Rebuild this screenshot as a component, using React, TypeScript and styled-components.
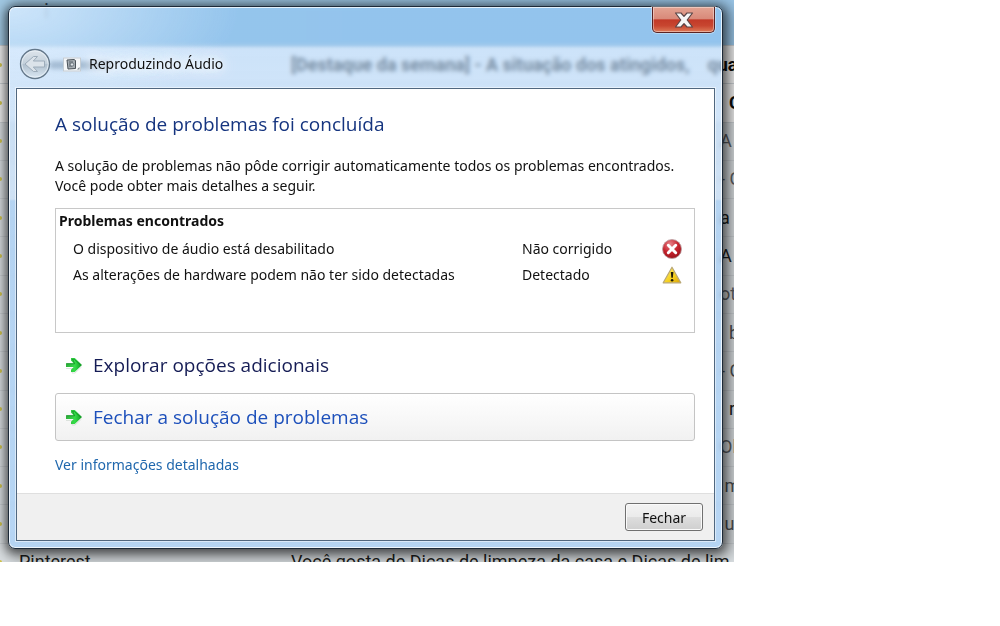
import React from "react";
import styled, { createGlobalStyle } from "styled-components";

const GlobalStyle = createGlobalStyle`
  * { box-sizing: border-box; }
  body { margin: 0; background: #fff; }
`;

const uiFont = `"Noto Sans", "Open Sans", sans-serif`;
const displayFont = `"Open Sans", "Noto Sans", sans-serif`;

/* ---------- desktop and the mail list behind the window ---------- */

const Desktop = styled.div`
  position: relative;
  display: flow-root;
  width: 73.4%;
  padding: 6px 11px 13px 8px;
  overflow: hidden;
`;

const MailPage = styled.div`
  position: absolute;
  inset: 0 0 -19px 0;
  display: flex;
  flex-direction: column;
  background: #e4e9ed;
  font-family: Roboto, "Liberation Sans", sans-serif;
`;

const MailToolbar = styled.div`
  flex: none;
  height: 45px;
  padding: 0 44px;
  background: linear-gradient(90deg, #a3cbe6, #9cc8ea);
  color: #33475a;
  font-size: 20px;
  line-height: 22px;
`;

const MailList = styled.ul`
  flex: 1;
  display: grid;
  grid-auto-rows: 1fr;
  margin: 0;
  padding: 0;
  list-style: none;
`;

const MailRow = styled.li<{ $unread?: boolean; $tone: string }>`
  display: grid;
  grid-template-columns: 19px 272px 1fr 14px;
  align-items: center;
  border-top: 1px solid #cdd2d6;
  background: ${(p) => (p.$unread ? "#f3f3f3" : "#dce1e4")};
  color: ${(p) => p.$tone};
  font-size: 18px;
  font-weight: ${(p) => (p.$unread ? 700 : 400)};
  line-height: 24px;
  white-space: pre;
`;

const MailCell = styled.span`
  min-width: 0;
  overflow: hidden;
`;

const SubjectCell = styled(MailCell)`
  grid-column: 3 / 5;
`;

const Star = styled.i`
  width: 2px;
  height: 4px;
  border-radius: 0 2px 2px 0;
  background: #d3c64c;
`;

const SenderBadge = styled.i`
  display: block;
  width: 62px;
  height: 8px;
  margin-left: 30px;
  border-radius: 4px;
  background: #3d4d5c;
`;

/* ---------- glass window ---------- */

const Window = styled.section`
  position: relative;
  padding: 0 7px 7px;
  border: 1px solid #1d2a38;
  border-radius: 7px;
  background:
    radial-gradient(ellipse 230px 110px at 0 0, rgba(225, 240, 255, 0.75), transparent),
    linear-gradient(
      180deg,
      rgba(140, 193, 240, 0.6) 0,
      rgba(140, 193, 240, 0.6) 38px,
      rgba(180, 216, 252, 0.62) 42px,
      rgba(200, 225, 252, 0.66) 192px,
      rgba(160, 204, 248, 0.66) 194px,
      rgba(166, 208, 250, 0.7) 100%
    );
  backdrop-filter: blur(2px);
  box-shadow:
    inset 0 0 0 1px rgba(255, 255, 255, 0.75),
    0 2px 8px 2px rgba(0, 0, 0, 0.45),
    3px 3px 16px 6px rgba(0, 0, 0, 0.4);
  font-family: ${uiFont};
  font-size: 14px;
  line-height: 20px;
  color: #111;
`;

const TitleBar = styled.header`
  display: flex;
  flex-direction: column;
  height: 81px;
`;

const CloseButton = styled.button`
  flex: none;
  align-self: flex-end;
  display: grid;
  place-items: center;
  width: 63px;
  height: 26px;
  padding: 0;
  border: 1px solid #5b2323;
  border-top: 0;
  border-radius: 0 0 5px 5px;
  background: linear-gradient(180deg, #e3a493 0, #d98a7a 46%, #c23a28 52%, #c84630 75%, #dd7a58 100%);
  box-shadow: inset 0 0 0 1px rgba(255, 255, 255, 0.4), 0 0 0 1px rgba(255, 255, 255, 0.35);
`;

const Caption = styled.div`
  display: flex;
  align-items: center;
  padding: 15px 0 0 3px;
`;

const BackButton = styled.button`
  display: grid;
  place-items: center;
  width: 32px;
  height: 32px;
  margin-right: 12px;
  padding: 0;
  border: 0;
  border-radius: 50%;
  background: none;
`;

const WindowTitle = styled.h1`
  margin: 0 0 0 8px;
  font-size: 14px;
  font-weight: 400;
  text-shadow: 0 0 8px #fff, 0 0 12px #fff, 0 0 16px #fff;
`;

const Client = styled.main`
  border: 1px solid #50677f;
  background: #fff;
  box-shadow: 0 0 0 1px rgba(255, 255, 255, 0.5);
`;

const Content = styled.div`
  padding: 20px 19px 18px 38px;
`;

const Heading = styled.h2`
  margin: 0 0 17px;
  font-family: ${displayFont};
  font-size: 19px;
  font-weight: 400;
  line-height: 30px;
  color: #15347f;
`;

const Intro = styled.p`
  margin: 0 0 12px;
`;

const ProblemBox = styled.div`
  min-height: 125px;
  border: 1px solid #c8c8c8;
`;

const ProblemTable = styled.table`
  width: 100%;
  border-collapse: collapse;
  th, td {
    padding: 0;
    text-align: left;
    line-height: 26px;
  }
  th { padding: 0 0 3px 3px; font-weight: 700; line-height: 24px; }
  td:first-child { padding-left: 17px; }
  td:nth-child(2) { width: 140px; }
  td:nth-child(3) { width: 32px; }
  svg { display: block; }
`;

const Commands = styled.div`
  display: grid;
  gap: 4px;
  margin: 8px 0 14px;
`;

const CommandLink = styled.button<{ $active?: boolean }>`
  display: flex;
  align-items: center;
  gap: 10px;
  height: 48px;
  padding: 0 8px;
  border: 1px solid ${(p) => (p.$active ? "#c4c4c4" : "transparent")};
  border-radius: 3px;
  background: ${(p) => (p.$active ? "linear-gradient(180deg, #fff, #f1f1f1)" : "none")};
  color: ${(p) => (p.$active ? "#1d50bb" : "#151c55")};
  font-family: ${displayFont};
  font-size: 19px;
  line-height: 28px;
  text-align: left;
`;

const DetailsLink = styled.a`
  color: #1f67ad;
  text-decoration: none;
`;

const Footer = styled.footer`
  display: flex;
  justify-content: flex-end;
  padding: 9px 11px;
  border-top: 1px solid #dfdfdf;
  background: #f0f0f0;
`;

const PushButton = styled.button`
  width: 78px;
  height: 28px;
  padding: 0;
  border: 1px solid #707070;
  border-radius: 3px;
  background: linear-gradient(180deg, #f3f3f3 0, #ebebeb 48%, #dddddd 52%, #cfcfcf 100%);
  box-shadow: inset 0 0 0 1px #fafafa;
  color: #111;
  font-family: inherit;
  font-size: 14px;
`;

/* ---------- drawings ---------- */

const CloseGlyph = () => (
  <svg width="20" height="16" viewBox="0 0 20 16" aria-hidden="true">
    <path
      d="M1.500 1h5.500l3 3.400 3-3.400h5.500L13.200 8l5.300 7H13l-3-3.400L7 15H1.500l5.300-7z"
      fill="#f6f6f6"
      stroke="#5a4546"
      strokeWidth="1.2"
      strokeLinejoin="round"
    />
  </svg>
);

const BackGlyph = () => (
  <svg width="32" height="32" viewBox="0 0 32 32" aria-hidden="true">
    <defs>
      <linearGradient id="orb" x1="0" y1="0" x2="0" y2="1">
        <stop offset="0" stopColor="#dfe6ec" />
        <stop offset="0.48" stopColor="#c3d0db" />
        <stop offset="0.52" stopColor="#b0c0ce" />
        <stop offset="1" stopColor="#dce9f4" />
      </linearGradient>
    </defs>
    <circle cx="16" cy="16" r="14.5" fill="url(#orb)" stroke="#64788a" strokeWidth="1.3" />
    <circle cx="16" cy="16" r="13.2" fill="none" stroke="#eef5fb" strokeOpacity="0.7" />
    <path
      d="M6 16l8.500-7.500h4L14.300 13H25.500v6H14.300l4.200 4.500h-4z"
      fill="#dbe3ea"
      stroke="#9dacba"
      strokeLinejoin="round"
    />
  </svg>
);

const AppIcon = () => (
  <svg width="18" height="15" viewBox="0 0 18 14" aria-hidden="true">
    <rect width="18" height="14" fill="#f5f7f9" />
    <rect x="0.500" y="0.500" width="17" height="13" fill="none" stroke="#c3ccd4" />
    <path d="M4 2.500l7-.5 1.500 1v8L5 11.500z" fill="#a6adb3" stroke="#4a5259" />
    <path d="M6 4.500h4M6 6.500h3M6 8.500h3" stroke="#59636b" />
    <circle cx="9" cy="7" r="1.700" fill="#dfe5ea" stroke="#59636b" strokeWidth="0.8" />
    <path d="M14 12l2.500-2.500V12z" fill="#7b858d" />
  </svg>
);

const ErrorIcon = () => (
  <svg width="20" height="20" viewBox="0 0 20 20" role="img" aria-label="Erro">
    <defs>
      <radialGradient id="err" cx="0.4" cy="0.25" r="0.8">
        <stop offset="0" stopColor="#e8838a" />
        <stop offset="0.55" stopColor="#c4222c" />
        <stop offset="1" stopColor="#98131c" />
      </radialGradient>
    </defs>
    <circle cx="10" cy="10" r="9.500" fill="url(#err)" stroke="#b9a0a2" strokeWidth="0.8" />
    <path d="M6.300 6.300l7.400 7.400M13.700 6.300l-7.400 7.400" stroke="#fff" strokeWidth="3" strokeLinecap="round" />
  </svg>
);

const WarningIcon = () => (
  <svg width="20" height="20" viewBox="0 0 20 20" role="img" aria-label="Aviso">
    <defs>
      <linearGradient id="warn" x1="0" y1="0" x2="1" y2="1">
        <stop offset="0" stopColor="#fff27a" />
        <stop offset="0.6" stopColor="#f5cf1d" />
        <stop offset="1" stopColor="#d8a20c" />
      </linearGradient>
    </defs>
    <path d="M10 2.200L18.800 17.800H1.200z" fill="url(#warn)" stroke="#b9a775" strokeWidth="1.200" strokeLinejoin="round" />
    <path d="M8.800 7h2.600l-.6 5.800H9.400z" fill="#1d1a08" />
    <circle cx="10.100" cy="15.200" r="1.300" fill="#1d1a08" />
  </svg>
);

const ArrowIcon = () => (
  <svg width="19" height="19" viewBox="0 0 19 19" aria-hidden="true">
    <defs>
      <linearGradient id="arr" x1="0" y1="0" x2="1" y2="0">
        <stop offset="0" stopColor="#2fae3c" />
        <stop offset="0.55" stopColor="#35dd48" />
        <stop offset="1" stopColor="#109a22" />
      </linearGradient>
    </defs>
    <path d="M2 12.500h7L8 17h3l6.500-6" fill="none" stroke="#c9d3cc" strokeOpacity="0.6" />
    <path
      d="M2 7.300h7.500L7 4.600V2h3.800L18 9l-7.200 7H7v-2.200L9.700 11H2z"
      fill="url(#arr)"
    />
    <path d="M2.500 7.800H10.700L8.500 3.200h1.700L16.500 9" fill="none" stroke="#118324" strokeOpacity="0.7" />
  </svg>
);

/* ---------- data ---------- */

type Mail = { sender?: string; subject?: string; tail?: string; tone: string; unread?: boolean };

const mails: Mail[] = [
  { subject: "[Destaque da semana] - A situação dos atingidos,    qua", tone: "#0c0c0c", unread: true },
  { tail: "  C", tone: "#0c0c0c", unread: true },
  { tail: "A", tone: "#5c6064" },
  { tail: "- C", tone: "#5c6064" },
  { tail: "a", tone: "#1c1e20" },
  { tail: "A", tone: "#1c1e20" },
  { tail: "ot", tone: "#5c6064" },
  { tail: "  b", tone: "#4c5054" },
  { tail: "- C", tone: "#4c5054" },
  { tail: "  r", tone: "#1c1e20" },
  { tail: "Ol", tone: "#5c6064" },
  { tail: " m", tone: "#4c5054" },
  { tail: " u", tone: "#4c5054" },
  { sender: "Pinterest", subject: "Você gosta de Dicas de limpeza da casa e Dicas de lim", tone: "#1c1e20" },
];

const problems = [
  { text: "O dispositivo de áudio está desabilitado", status: "Não corrigido", icon: <ErrorIcon /> },
  { text: "As alterações de hardware podem não ter sido detectadas", status: "Detectado", icon: <WarningIcon /> },
];

export default function App() {
  return (
    <>
      <GlobalStyle />
      <Desktop>
        <MailPage aria-hidden="true">
          <MailToolbar>i</MailToolbar>
          <MailList>
            {mails.map((m, i) => (
              <MailRow key={i} $unread={m.unread} $tone={m.tone}>
                <Star />
                <MailCell>{m.sender ?? (i === 0 && <SenderBadge />)}</MailCell>
                {m.subject ? (
                  <SubjectCell>{m.subject}</SubjectCell>
                ) : (
                  <>
                    <MailCell />
                    <MailCell>{m.tail}</MailCell>
                  </>
                )}
              </MailRow>
            ))}
          </MailList>
        </MailPage>

        <Window aria-label="Reproduzindo Áudio">
          <TitleBar>
            <CloseButton aria-label="Fechar janela">
              <CloseGlyph />
            </CloseButton>
            <Caption>
              <BackButton aria-label="Voltar">
                <BackGlyph />
              </BackButton>
              <AppIcon />
              <WindowTitle>Reproduzindo Áudio</WindowTitle>
            </Caption>
          </TitleBar>

          <Client>
            <Content>
              <Heading>A solução de problemas foi concluída</Heading>
              <Intro>
                A solução de problemas não pôde corrigir automaticamente todos os problemas encontrados.
                <br />
                Você pode obter mais detalhes a seguir.
              </Intro>
              <ProblemBox>
                <ProblemTable>
                  <thead>
                    <tr>
                      <th colSpan={3}>Problemas encontrados</th>
                    </tr>
                  </thead>
                  <tbody>
                    {problems.map((p) => (
                      <tr key={p.text}>
                        <td>{p.text}</td>
                        <td>{p.status}</td>
                        <td>{p.icon}</td>
                      </tr>
                    ))}
                  </tbody>
                </ProblemTable>
              </ProblemBox>
              <Commands>
                <CommandLink>
                  <ArrowIcon />
                  Explorar opções adicionais
                </CommandLink>
                <CommandLink $active>
                  <ArrowIcon />
                  Fechar a solução de problemas
                </CommandLink>
              </Commands>
              <DetailsLink href="#detalhes">Ver informações detalhadas</DetailsLink>
            </Content>
            <Footer>
              <PushButton>Fechar</PushButton>
            </Footer>
          </Client>
        </Window>
      </Desktop>
    </>
  );
}
